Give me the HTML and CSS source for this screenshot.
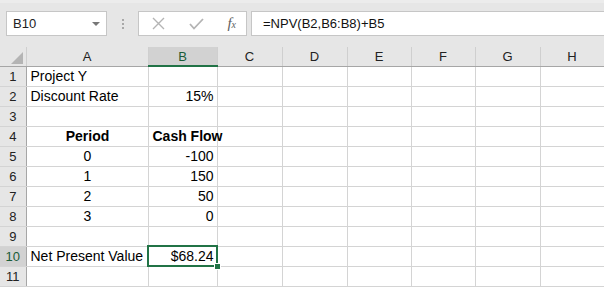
FILE: index.html
```html
<!DOCTYPE html>
<html lang="en">
<head>
<meta charset="UTF-8" />
<meta name="viewport" content="width=device-width, initial-scale=1" />
<title>NPV - Excel</title>
<link rel="stylesheet" href="styles.css">
</head>
<body>

<div class="toolbar">
  <div class="name-box">
    <span>B10</span>
    <span class="drop"></span>
  </div>
  <div class="grip"><i></i><i></i><i></i></div>
  <div class="fx-buttons">
    <svg width="13" height="13" viewBox="0 0 13 13"><path d="M1 1 L12 12 M12 1 L1 12" stroke="#b4b4b4" stroke-width="1.4" fill="none"/></svg>
    <svg width="15" height="12" viewBox="0 0 15 12"><path d="M1 6 L5 10.5 L14 1" stroke="#b4b4b4" stroke-width="1.8" fill="none"/></svg>
    <span class="fx">f<small>x</small></span>
  </div>
  <div class="formula">=NPV(B2,B6:B8)+B5</div>
</div>

<table class="sheet">
  <colgroup>
    <col style="width:26px"><col style="width:122px"><col style="width:69px"><col style="width:65px">
    <col style="width:65px"><col style="width:64px"><col style="width:64px"><col style="width:65px"><col style="width:64px">
  </colgroup>
  <tr class="head">
    <th class="corner"><span class="tri"></span></th>
    <th>A</th><th class="sel">B</th><th>C</th><th>D</th><th>E</th><th>F</th><th>G</th><th>H</th>
  </tr>
  <tr><th>1</th><td>Project Y</td><td></td><td></td><td></td><td></td><td></td><td></td><td></td></tr>
  <tr><th>2</th><td>Discount Rate</td><td class="num">15%</td><td></td><td></td><td></td><td></td><td></td><td></td></tr>
  <tr><th>3</th><td></td><td></td><td></td><td></td><td></td><td></td><td></td><td></td></tr>
  <tr><th>4</th><td class="mid bold">Period</td><td class="mid bold">Cash Flow</td><td></td><td></td><td></td><td></td><td></td><td></td></tr>
  <tr><th>5</th><td class="mid">0</td><td class="num">-100</td><td></td><td></td><td></td><td></td><td></td><td></td></tr>
  <tr><th>6</th><td class="mid">1</td><td class="num">150</td><td></td><td></td><td></td><td></td><td></td><td></td></tr>
  <tr><th>7</th><td class="mid">2</td><td class="num">50</td><td></td><td></td><td></td><td></td><td></td><td></td></tr>
  <tr><th>8</th><td class="mid">3</td><td class="num">0</td><td></td><td></td><td></td><td></td><td></td><td></td></tr>
  <tr><th>9</th><td></td><td></td><td></td><td></td><td></td><td></td><td></td><td></td></tr>
  <tr><th class="sel-row">10</th><td>Net Present Value</td><td class="num active">$68.24</td><td></td><td></td><td></td><td></td><td></td><td></td></tr>
  <tr><th>11</th><td></td><td></td><td></td><td></td><td></td><td></td><td></td><td></td></tr>
</table>

</body>
</html>
```

FILE: styles.css
```css
body { margin: 0; background: #e6e6e6; font-family: "Liberation Sans", Arial, sans-serif; overflow: hidden; }

.toolbar {
  display: flex; align-items: flex-start; height: 47px;
  padding: 8px 0 0 6px; border-top: 3px solid #ececec;
  box-sizing: border-box;
}
.name-box, .fx-buttons, .formula {
  height: 25px; box-sizing: border-box; background: #fff;
  border: 1px solid #c6c6c6; display: flex; align-items: center;
}
.name-box { width: 101px; padding: 0 6px 0 6px; justify-content: space-between; font-size: 13px; color: #222; }
.drop { width: 0; height: 0; border-left: 4px solid transparent; border-right: 4px solid transparent; border-top: 4px solid #777; }
.grip { width: 31px; height: 25px; display: flex; flex-direction: column; align-items: center; justify-content: center; gap: 2px; }
.grip i { width: 2px; height: 2px; background: #a8a8a8; display: block; }
.fx-buttons { width: 109px; padding: 0 10px 0 13px; justify-content: space-between; }
.fx { font-family: "Liberation Serif", serif; font-style: italic; font-size: 15px; color: #606060; }
.fx small { font-size: 10px; }
.formula { flex: 1; margin-left: 4px; padding-left: 11px; font-size: 13px; color: #111; border-right: none; }

.sheet { border-collapse: collapse; table-layout: fixed; width: 604px; background: #fff; font-size: 14px; }
.sheet th, .sheet td { height: 20px; padding: 0; box-sizing: border-box; }
.sheet td { border: 1px solid #d4d4d4; padding: 0 3px 0 4px; white-space: nowrap; color: #000; }
.sheet th {
  background: #e6e6e6; font-weight: normal; font-size: 13px; color: #222;
  border-right: 1px solid #c0c0c0; border-bottom: 1px solid #d4d4d4;
}
.head th { height: 19px; border-bottom: 1px solid #a6a6a6; border-right: 1px solid #cfcfcf; }
.head th.sel { background: #d2d2d2; border-bottom: 2px solid #217346; color: #1a5c38; }
.corner { position: relative; }
.tri {
  position: absolute; right: 3px; bottom: 2px; width: 0; height: 0;
  border-left: 12px solid transparent; border-bottom: 12px solid #b4b4b4;
}
.sheet tr:not(.head) th { border-right: 1px solid #a6a6a6; }
.sheet th.sel-row { background: #d2d2d2; border-right: 2px solid #217346; color: #1a5c38; }

.num { text-align: right; }
.mid { text-align: center; }
.bold { font-weight: bold; }
.active { position: relative; outline: 2px solid #217346; outline-offset: -1px; }
.active::after {
  content: ""; position: absolute; right: -4px; bottom: -4px;
  width: 5px; height: 5px; background: #217346; border: 1px solid #fff;
}
```
